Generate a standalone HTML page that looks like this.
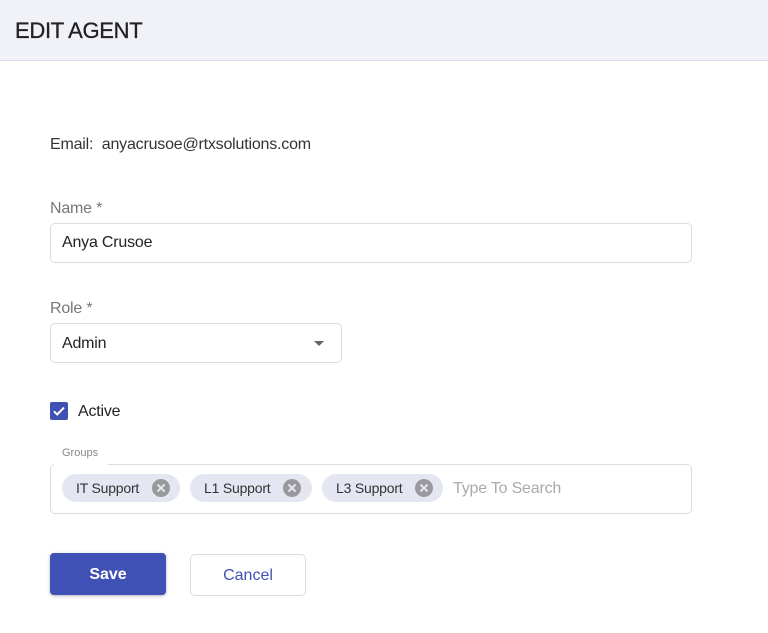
<!DOCTYPE html><html><head><style>
body{margin:0;width:768px;height:633px;background:#fff;font-family:"Liberation Sans",sans-serif;position:relative;overflow:hidden}
.a{position:absolute}
.hdr{left:0;top:0;width:768px;height:60px;background:#f1f2f8;border-bottom:1px solid #d8dcec}
.box{border:1px solid #dcdcdc;border-radius:5px;box-sizing:border-box}
.chip{height:28px;border-radius:14px;background:#e4e7f1;top:474px;font-size:14px;color:#333;line-height:29px;box-sizing:border-box;padding-left:14px;letter-spacing:-0.2px}
.x{position:absolute;top:5px;width:18px;height:18px;border-radius:50%;background:#9a9a9e}
.x:before,.x:after{content:"";position:absolute;left:4px;top:8px;width:10px;height:2px;background:#e4e7f1;transform:rotate(45deg)}
.x:after{transform:rotate(-45deg)}
.t{font-size:16px;letter-spacing:-0.2px}
</style></head><body>
<div class="a hdr"></div>
<div class="a" style="left:15px;top:18px;font-size:22px;color:#222;letter-spacing:-0.3px;-webkit-text-stroke:0.3px #222">EDIT AGENT</div>
<div class="a t" style="left:50px;top:136px;color:#333">Email:&nbsp; anyacrusoe@rtxsolutions.com</div>
<div class="a t" style="left:50px;top:200px;color:#777">Name *</div>
<div class="a box" style="left:50px;top:223px;width:642px;height:40px"></div>
<div class="a t" style="left:62px;top:234px;color:#222">Anya Crusoe</div>
<div class="a t" style="left:50px;top:300px;color:#777">Role *</div>
<div class="a box" style="left:50px;top:323px;width:292px;height:40px"></div>
<div class="a t" style="left:62px;top:335px;color:#222">Admin</div>
<div class="a" style="left:314px;top:341px;width:0;height:0;border-left:5px solid transparent;border-right:5px solid transparent;border-top:5px solid #666"></div>
<div class="a" style="left:50px;top:402px;width:18px;height:18px;background:#3f51b5;border-radius:2px">
<svg width="18" height="18" viewBox="0 0 18 18"><path d="M4 9.3l3.2 3.2L14 5.6" stroke="#fff" stroke-width="2" fill="none"/></svg></div>
<div class="a t" style="left:78px;top:403px;color:#222">Active</div>
<div class="a box" style="left:50px;top:464px;width:642px;height:50px"></div>
<div class="a" style="left:54px;top:446px;width:54px;height:20px;background:#fff"></div>
<div class="a" style="left:62px;top:447px;font-size:11px;color:#888">Groups</div>
<div class="a chip" style="left:62px;width:118px">IT Support<span class="x" style="left:90px"></span></div>
<div class="a chip" style="left:190px;width:122px">L1 Support<span class="x" style="left:93px"></span></div>
<div class="a chip" style="left:322px;width:121px">L3 Support<span class="x" style="left:93px"></span></div>
<div class="a t" style="left:453px;top:480px;color:#aaa">Type To Search</div>
<div class="a" style="left:50px;top:553px;width:116px;height:42px;background:#3f51b5;border-radius:4px;box-shadow:0 1px 3px rgba(0,0,0,.3);color:#fff;font-weight:bold;font-size:16px;line-height:43px;text-align:center">Save</div>
<div class="a box" style="left:190px;top:554px;width:116px;height:42px;color:#3f51b5;font-size:16px;line-height:41px;text-align:center">Cancel</div>
</body></html>
